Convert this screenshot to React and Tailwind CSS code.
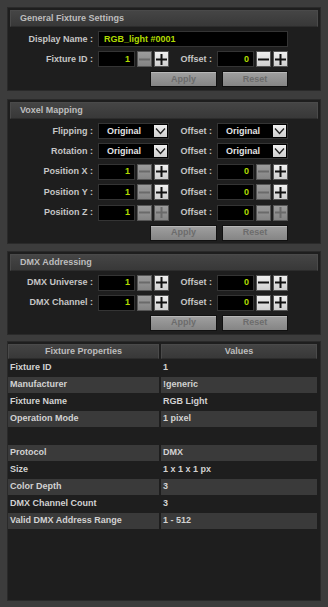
import React from "react";

const PANEL = "bg-[#1e1e1e] p-[3px] shadow-[inset_0_0_0_1px_#2a2a2a]";
const HEADER =
  "h-[17px] flex items-center pl-[9px] bg-gradient-to-b from-[#454545] to-[#383838] border border-[#4a4a4a] border-b-[#2c2c2c] text-[#bdbdbd]";
const LABEL = "flex items-center justify-end text-[#c6c6c6] whitespace-nowrap";
const INPUT =
  "h-[16px] bg-black border border-[#343434] flex items-center text-[#b0dc00]";
const BTN_ON =
  "w-[15px] h-[16px] flex items-center justify-center bg-gradient-to-b from-[#f0f0f0] to-[#cfcfcf] border border-[#555]";
const BTN_OFF =
  "w-[15px] h-[16px] flex items-center justify-center bg-gradient-to-b from-[#9c9c9c] to-[#848484] border border-[#555]";
const ACTION =
  "h-[16px] flex items-center justify-center bg-gradient-to-b from-[#a0a0a0] to-[#858585] border border-[#111] text-[#6c6c6c] shadow-[inset_0_1px_0_#b8b8b8]";

const Minus = ({ on }) => (
  <svg width="11" height="11" viewBox="0 0 11 11">
    <rect x="0" y="4.5" width="11" height="2" fill={on ? "#111" : "#6a6a6a"} />
  </svg>
);

const Plus = ({ on }) => (
  <svg width="11" height="11" viewBox="0 0 11 11">
    <rect x="0" y="4.5" width="11" height="2" fill={on ? "#111" : "#6a6a6a"} />
    <rect x="4.5" y="0" width="2" height="11" fill={on ? "#111" : "#6a6a6a"} />
  </svg>
);

const Stepper = ({ value, minus, plus }) => (
  <div className="w-[71px] flex items-center gap-[2px]">
    <div className={INPUT + " w-[37px] justify-end pr-[4px]"}>{value}</div>
    <div className={minus ? BTN_ON : BTN_OFF}>
      <Minus on={minus} />
    </div>
    <div className={plus ? BTN_ON : BTN_OFF}>
      <Plus on={plus} />
    </div>
  </div>
);

const Select = ({ value }) => (
  <div className="w-[71px] h-[16px] bg-black border border-[#343434] flex items-center justify-between pl-[8px] pr-[1px]">
    <span className="text-[#e4e4e4]">{value}</span>
    <div className="w-[13px] h-[12px] bg-gradient-to-b from-[#f0f0f0] to-[#cfcfcf] flex items-center justify-center">
      <svg width="11" height="8" viewBox="0 0 11 8">
        <path d="M1 1.5 L5.5 6.5 L10 1.5" stroke="#222" strokeWidth="1.3" fill="none" />
      </svg>
    </div>
  </div>
);

const Row = ({ label, children, offset }) => (
  <div className="flex items-center h-[16px]">
    <div className={LABEL + " w-[83px]"}>{label}</div>
    <div className="ml-[5px]">{children}</div>
    {offset && (
      <>
        <div className={LABEL + " w-[43px]"}>Offset :</div>
        <div className="ml-[5px]">{offset}</div>
      </>
    )}
  </div>
);

const Actions = () => (
  <div className="flex h-[16px] pl-[140px] gap-[5px]">
    <div className={ACTION + " w-[67px]"}>Apply</div>
    <div className={ACTION + " w-[66px]"}>Reset</div>
  </div>
);

const props = [
  ["Fixture ID", "1"],
  ["Manufacturer", "!generic"],
  ["Fixture Name", "RGB Light"],
  ["Operation Mode", "1 pixel"],
  ["", ""],
  ["Protocol", "DMX"],
  ["Size", "1 x 1 x 1 px"],
  ["Color Depth", "3"],
  ["DMX Channel Count", "3"],
  ["Valid DMX Address Range", "1 - 512"],
];

export default function App() {
  return (
    <div className="w-[328px] h-[607px] bg-[#3c3c3c] px-[7px] pt-[7px] pb-[6px] flex flex-col font-['Liberation_Sans',Arial,sans-serif] text-[9px] font-bold leading-none">
      {/* General */}
      <div className={PANEL}>
        <div className={HEADER}>General Fixture Settings</div>
        <div className="flex flex-col gap-[4px] mt-[4px] pb-[1px]">
          <Row label="Display Name :">
            <div className={INPUT + " w-[190px] pl-[5px]"}>RGB_light #0001</div>
          </Row>
          <Row
            label="Fixture ID :"
            offset={<Stepper value="0" minus plus />}
          >
            <Stepper value="1" plus />
          </Row>
          <Actions />
        </div>
      </div>

      {/* Voxel */}
      <div className={PANEL + " mt-[8px]"}>
        <div className={HEADER}>Voxel Mapping</div>
        <div className="flex flex-col gap-[4.4px] mt-[4px] pb-[0px]">
          <Row label="Flipping :" offset={<Select value="Original" />}>
            <Select value="Original" />
          </Row>
          <Row label="Rotation :" offset={<Select value="Original" />}>
            <Select value="Original" />
          </Row>
          <Row label="Position X :" offset={<Stepper value="0" plus />}>
            <Stepper value="1" plus />
          </Row>
          <Row label="Position Y :" offset={<Stepper value="0" plus />}>
            <Stepper value="1" plus />
          </Row>
          <Row label="Position Z :" offset={<Stepper value="0" />}>
            <Stepper value="1" />
          </Row>
          <Actions />
        </div>
      </div>

      {/* DMX */}
      <div className={PANEL + " mt-[7px]"}>
        <div className={HEADER}>DMX Addressing</div>
        <div className="flex flex-col gap-[4px] mt-[4px] pb-[1px]">
          <Row label="DMX Universe :" offset={<Stepper value="0" minus plus />}>
            <Stepper value="1" plus />
          </Row>
          <Row label="DMX Channel :" offset={<Stepper value="0" minus plus />}>
            <Stepper value="1" plus />
          </Row>
          <Actions />
        </div>
      </div>

      {/* Properties table */}
      <div className="mt-[6px] flex-1 bg-[#1e1e1e] pt-[3px] pl-[1px] pr-[3px] shadow-[inset_0_0_0_1px_#2a2a2a]">
        <div className="grid grid-cols-[151px_156px] gap-x-[2px]">
          <div className="h-[15px] flex items-center justify-center bg-gradient-to-b from-[#444] to-[#383838] border border-[#4a4a4a] border-b-[#2c2c2c] text-[#bdbdbd]">
            Fixture Properties
          </div>
          <div className="h-[15px] flex items-center justify-center bg-gradient-to-b from-[#444] to-[#383838] border border-[#4a4a4a] border-b-[#2c2c2c] text-[#bdbdbd]">
            Values
          </div>
          {props.map(([k, v], i) => (
            <React.Fragment key={i}>
              <div className="h-[17px] pt-[1px]">
                <div className={"h-full flex items-center pl-[2px] text-[#d2d2d2] " + (i % 2 === 1 ? "bg-[#3a3a3a]" : "")}>
                  {k}
                </div>
              </div>
              <div className="h-[17px] pt-[1px]">
                <div className={"h-full flex items-center pl-[2px] text-[#d2d2d2] " + (i % 2 === 1 ? "bg-[#3a3a3a]" : "")}>
                  {v}
                </div>
              </div>
            </React.Fragment>
          ))}
        </div>
      </div>
    </div>
  );
}
